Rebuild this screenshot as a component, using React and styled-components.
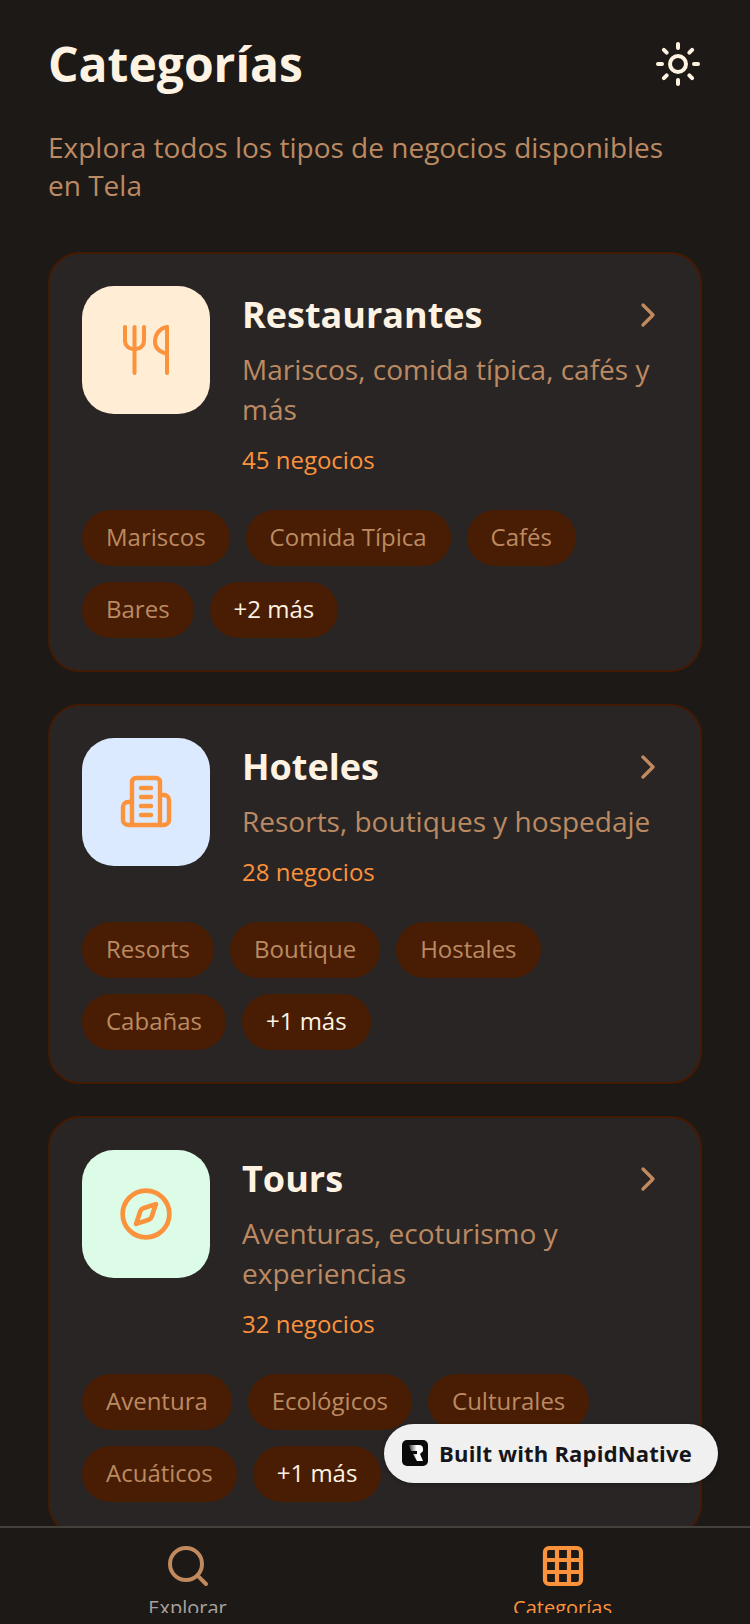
import React from 'react'
import styled, { createGlobalStyle } from 'styled-components'
import { ChevronRight, Compass, Grid3x3, Search, Sun } from 'lucide-react'

const categories = [
  {
    name: 'Restaurantes',
    description: 'Mariscos, comida típica, cafés y más',
    count: '45 negocios',
    tint: '#ffedd5',
    icon: 'food',
    tags: ['Mariscos', 'Comida Típica', 'Cafés', 'Bares'],
    more: '+2 más',
  },
  {
    name: 'Hoteles',
    description: 'Resorts, boutiques y hospedaje',
    count: '28 negocios',
    tint: '#dbeafe',
    icon: 'hotel',
    tags: ['Resorts', 'Boutique', 'Hostales', 'Cabañas'],
    more: '+1 más',
  },
  {
    name: 'Tours',
    description: 'Aventuras, ecoturismo y experiencias',
    count: '32 negocios',
    tint: '#dcfce7',
    icon: 'compass',
    tags: ['Aventura', 'Ecológicos', 'Culturales', 'Acuáticos'],
    more: '+1 más',
  },
]

const GlobalStyle = createGlobalStyle`
  html, body {
    margin: 0;
    padding: 0;
    background: #1c1917;
  }
  * {
    box-sizing: border-box;
  }
`

const Screen = styled.div`
  position: relative;
  width: 750px;
  height: 1624px;
  display: flex;
  flex-direction: column;
  overflow: hidden;
  background: #1c1917;
  font-family: "Open Sans", "Noto Sans", sans-serif;
`

const Scroll = styled.main`
  flex: 1;
  min-height: 0;
  overflow: hidden;
  padding: 32px 48px 0;
`

const Header = styled.header`
  display: flex;
  align-items: center;
  justify-content: space-between;
  height: 64px;
  margin-bottom: 32px;
`

const Title = styled.h1`
  margin: 0;
  font-size: 48px;
  line-height: 66px;
  font-weight: 700;
  color: #fef3e2;
`

const ThemeButton = styled.div`
  display: flex;
  color: #fef3e2;
`

const Subtitle = styled.p`
  margin: 0 0 48px;
  font-size: 28px;
  line-height: 38px;
  color: #bc8a62;
`

const Card = styled.article`
  display: flex;
  flex-direction: column;
  gap: 32px;
  padding: 32px;
  margin-bottom: 32px;
  background: #292524;
  border: 2px solid #451a03;
  border-radius: 32px;
`

const CardTop = styled.div`
  display: flex;
  align-items: flex-start;
  gap: 32px;
`

const IconTile = styled.div`
  flex: none;
  width: 128px;
  height: 128px;
  display: flex;
  align-items: center;
  justify-content: center;
  border-radius: 32px;
  background: ${p => p.$tint};
  color: #fb923c;
`

const Info = styled.div`
  flex: 1;
  min-width: 0;
  padding-top: 1px;
`

const NameRow = styled.div`
  display: flex;
  align-items: center;
  justify-content: space-between;
  margin-bottom: 6px;
`

const Name = styled.h2`
  margin: 0;
  font-size: 36px;
  line-height: 56px;
  font-weight: 700;
  color: #fef3e2;
`

const Chevron = styled(ChevronRight)`
  flex: none;
  color: #c08a5e;
`

const Description = styled.p`
  margin: 0 0 13px;
  font-size: 28px;
  line-height: 40px;
  color: #bc8a62;
`

const Count = styled.div`
  font-size: 24px;
  line-height: 36px;
  color: #fb923c;
`

const Tags = styled.div`
  display: flex;
  flex-wrap: wrap;
  gap: 16px;
`

const Tag = styled.span`
  height: 56px;
  padding: 0 24px 4px;
  display: flex;
  align-items: center;
  border-radius: 28px;
  background: #481d03;
  font-size: 24px;
  color: ${p => (p.$more ? '#fef3e2' : '#bc8a62')};
`

const TabBar = styled.nav`
  flex: none;
  height: 98px;
  display: flex;
  background: #1c1917;
  border-top: 2px solid #44403c;
`

const Tab = styled.div`
  flex: 1;
  display: flex;
  flex-direction: column;
  align-items: center;
  padding-top: 14px;
  gap: 4px;
  color: ${p => (p.$active ? '#fb923c' : '#c08a5e')};
`

/* the label is cut by its own box in the reference too */
const TabLabel = styled.span`
  height: 19px;
  overflow: hidden;
  font-size: 20px;
  line-height: 28px;
  color: ${p => (p.$active ? '#fb923c' : '#a8a29e')};
`

const Badge = styled.div`
  position: absolute;
  left: 384px;
  top: 1424px;
  width: 334px;
  height: 59px;
  display: flex;
  align-items: center;
  gap: 11px;
  padding: 0 0 2px 18px;
  border-radius: 30px;
  background: #f0f0f0;
  box-shadow: 0 1px 4px rgba(0, 0, 0, 0.3);
  font-size: 22px;
  font-weight: 700;
  letter-spacing: 0.2px;
  color: #16161a;
`

const FoodIcon = () => (
  <svg width="56" height="56" viewBox="0 0 56 56" fill="none" stroke="currentColor" strokeWidth="4" strokeLinecap="round" strokeLinejoin="round">
    <path d="M7 5v14a8 8 0 0 0 8 8h3a8 8 0 0 0 8-8V5" />
    <path d="M16.500 5v46" />
    <path d="M49 5c-7 1-12 7-12 15 0 6 5 10 12 12" />
    <path d="M49 5v46" />
  </svg>
)

const HotelIcon = () => (
  <svg width="56" height="56" viewBox="0 0 56 56" fill="none" stroke="currentColor" strokeWidth="4.4" strokeLinecap="round" strokeLinejoin="round">
    <path d="M14 51V8a4 4 0 0 1 4-4h20a4 4 0 0 1 4 4v43" />
    <path d="M14 28h-4a5 5 0 0 0-5 5v13a5 5 0 0 0 5 5h36a5 5 0 0 0 5-5V26a5 5 0 0 0-5-5h-4" />
    <path d="M23 14h10M23 23h10M23 32h10M23 41h10" />
  </svg>
)

const CategoryIcon = ({ kind }) => {
  if (kind === 'food') return <FoodIcon />
  if (kind === 'hotel') return <HotelIcon />
  return <Compass size={56} strokeWidth={2} />
}

const RapidLogo = () => (
  <svg width="26" height="26" viewBox="0 0 26 26">
    <defs>
      <linearGradient id="rapid-fade" x1="0" x2="1" y1="0" y2="0">
        <stop offset="0" stopColor="#3a3a3a" />
        <stop offset="0.55" stopColor="#ffffff" />
      </linearGradient>
    </defs>
    <rect width="26" height="26" rx="5" fill="#0a0a0a" />
    <path d="M7 5h10a4 4 0 0 1 4 4v2l-3 3 3 7h-6l-4-7h4v-3H9z" fill="url(#rapid-fade)" />
  </svg>
)

const App = () => (
  <Screen>
    <GlobalStyle />
    <Scroll>
      <Header>
        <Title>Categorías</Title>
        <ThemeButton>
          <Sun size={48} strokeWidth={2} />
        </ThemeButton>
      </Header>
      <Subtitle>Explora todos los tipos de negocios disponibles en Tela</Subtitle>
      {categories.map(category => (
        <Card key={category.name}>
          <CardTop>
            <IconTile $tint={category.tint}>
              <CategoryIcon kind={category.icon} />
            </IconTile>
            <Info>
              <NameRow>
                <Name>{category.name}</Name>
                <Chevron size={40} strokeWidth={2} />
              </NameRow>
              <Description>{category.description}</Description>
              <Count>{category.count}</Count>
            </Info>
          </CardTop>
          <Tags>
            {category.tags.map(tag => (
              <Tag key={tag}>{tag}</Tag>
            ))}
            <Tag $more>{category.more}</Tag>
          </Tags>
        </Card>
      ))}
    </Scroll>
    <TabBar>
      <Tab>
        <Search size={48} strokeWidth={2} />
        <TabLabel>Explorar</TabLabel>
      </Tab>
      <Tab $active>
        <Grid3x3 size={48} strokeWidth={2.1} />
        <TabLabel $active>Categorías</TabLabel>
      </Tab>
    </TabBar>
    <Badge>
      <RapidLogo />
      Built with RapidNative
    </Badge>
  </Screen>
)

export default App
